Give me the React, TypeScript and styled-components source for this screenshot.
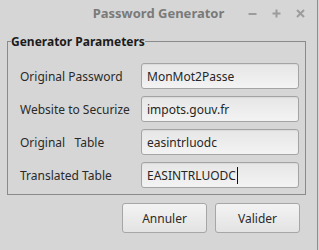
import React from "react";
import styled, { createGlobalStyle } from "styled-components";

const Global = createGlobalStyle`
  html, body { margin: 0; padding: 0; background: #d6d6d6; }
  body { font-family: "Noto Sans", "DejaVu Sans", sans-serif; }
`;

const Window = styled.div`
  width: 317px;
  height: 250px;
  background: #d6d6d6;
  border-right: 1px solid #8e8e8e;
  box-sizing: content-box;
  display: flex;
  flex-direction: column;
`;

const TitleBar = styled.div`
  height: 26px;
  display: grid;
  grid-template-columns: 1fr auto 1fr;
  align-items: center;
  padding: 0 12px 0 0;
`;

const Title = styled.div`
  grid-column: 2;
  font-weight: bold;
  font-size: 13px;
  color: #7a7a7a;
  padding-left: 12px;
`;

const Controls = styled.div`
  grid-column: 3;
  justify-self: end;
  display: flex;
  gap: 15px;
  align-items: center;
`;

const Ctl = styled.svg`
  display: block;
  width: 9px;
  height: 9px;
`;

const Group = styled.fieldset`
  margin: 7px 11px 0 7px;
  padding: 13px 6px 6px 12px;
  border: 1px solid #8a8a8a;
  border-radius: 0;
  display: grid;
  grid-template-columns: 121px 158px;
  row-gap: 7px;
  align-items: center;
`;

const Legend = styled.legend`
  padding: 0;
  margin-left: -9px;
  font-weight: bold;
  font-size: 12px;
  color: #1c1c1c;
  line-height: 17px;
`;

const Label = styled.label`
  font-size: 12px;
  color: #2a2a2a;
  white-space: pre;
`;

const Field = styled.div`
  height: 24px;
  border: 1px solid #a4a4a4;
  border-radius: 3px;
  background: linear-gradient(#e6e6e6, #f3f3f3);
  box-shadow: inset 0 1px 1px rgba(0,0,0,0.06);
  display: flex;
  align-items: center;
  padding-left: 5px;
  font-size: 12px;
  color: #262626;
`;

const Caret = styled.span`
  display: inline-block;
  width: 1px;
  height: 17px;
  background: #111;
  margin-left: 1px;
`;

const Buttons = styled.div`
  display: flex;
  justify-content: flex-end;
  gap: 8px;
  margin: 8px 17px 0 0;
`;

const Button = styled.button`
  width: 85px;
  height: 30px;
  border: 1px solid #a6a6a6;
  border-radius: 3px;
  background: linear-gradient(#f3f3f3, #e3e3e3);
  font-family: "Noto Sans", "DejaVu Sans", sans-serif;
  font-size: 12px;
  color: #2a2a2a;
  padding: 0;
`;

const rows: { label: string; value: string; caret?: boolean }[] = [
  { label: "Original Password", value: "MonMot2Passe" },
  { label: "Website to Securize", value: "impots.gouv.fr" },
  { label: "Original   Table", value: "easintrluodc" },
  { label: "Translated Table", value: "EASINTRLUODC", caret: true },
];

export default function App() {
  return (
    <>
      <Global />
      <Window>
        <TitleBar>
          <Title>Password Generator</Title>
          <Controls>
            <Ctl viewBox="0 0 9 9">
              <rect x="0.5" y="4" width="8" height="2" fill="#9c9c9c" />
            </Ctl>
            <Ctl viewBox="0 0 9 9">
              <rect x="0.5" y="3.5" width="8" height="2" fill="#9c9c9c" />
              <rect x="3.5" y="0.5" width="2" height="8" fill="#9c9c9c" />
            </Ctl>
            <Ctl viewBox="0 0 9 9">
              <path d="M1 1 L8 8 M8 1 L1 8" stroke="#9c9c9c" strokeWidth="2" />
            </Ctl>
          </Controls>
        </TitleBar>
        <Group>
          <Legend>Generator Parameters</Legend>
          {rows.map((r) => (
            <React.Fragment key={r.label}>
              <Label>{r.label}</Label>
              <Field>
                {r.value}
                {r.caret && <Caret />}
              </Field>
            </React.Fragment>
          ))}
        </Group>
        <Buttons>
          <Button>Annuler</Button>
          <Button>Valider</Button>
        </Buttons>
      </Window>
    </>
  );
}
